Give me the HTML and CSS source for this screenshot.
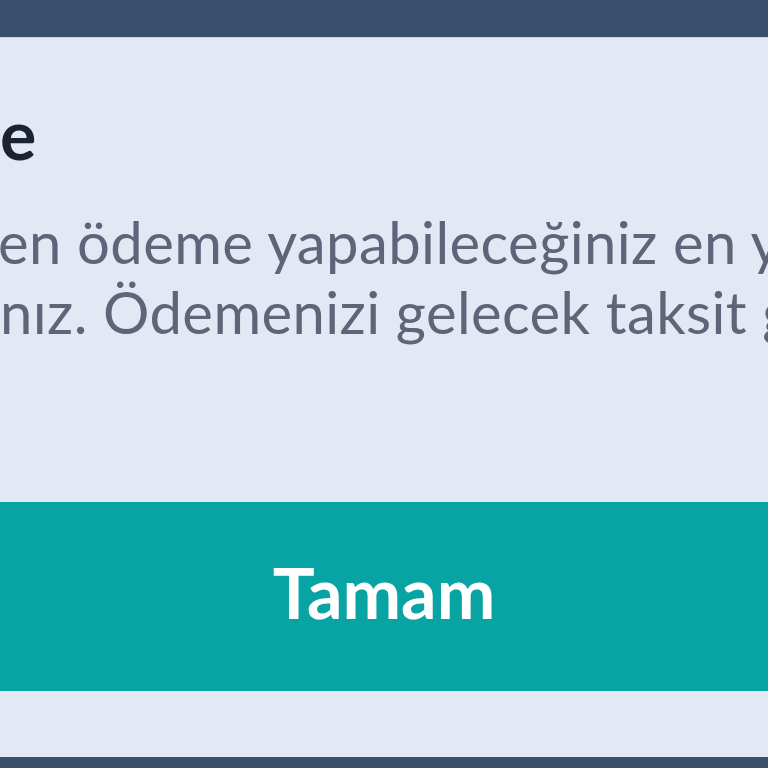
FILE: index.html
```html
<!DOCTYPE html>
<html lang="tr">
<head>
<meta charset="utf-8">
<link rel="stylesheet" href="styles.css">
</head>
<body>
<div class="topbar"></div>
<div class="panel">
  <div class="title">me</div>
  <div class="body">
    <div class="line line1">en ödeme yapabileceğiniz en yüksek</div>
    <div class="line line2">nız. Ödemenizi gelecek taksit günü</div>
  </div>
  <div class="button">Tamam</div>
</div>
<div class="bottombar"></div>
</body>
</html>
```
FILE: styles.css
```css
html, body {
  margin: 0;
  padding: 0;
  width: 768px;
  height: 768px;
  overflow: hidden;
  background: #e2e9f5;
  font-family: Lato, "Open Sans", sans-serif;
}
.topbar {
  height: 37px;
  background: #3a4f6b;
  border-bottom: 1px solid #c9cfee;
}
.panel {
  height: 719px;
  background: #e2e9f5;
  display: flex;
  flex-direction: column;
  overflow: hidden;
}
.title {
  margin-top: 56px;
  margin-left: -57px;
  font-size: 68px;
  line-height: 80px;
  font-weight: 700;
  color: #1b2232;
  white-space: nowrap;
}
.body {
  margin-top: 33px;
  color: #5f6579;
  font-size: 58px;
  letter-spacing: 0.4px;
  line-height: 70px;
  white-space: nowrap;
}
.line1 { margin-left: -2px; }
.line2 { margin-left: 0; }
.button {
  margin-top: 155px;
  height: 189px;
  flex-shrink: 0;
  box-sizing: border-box;
  padding-bottom: 10px;
  background: #08a3a3;
  color: #ffffff;
  font-size: 70px;
  font-weight: 700;
  display: flex;
  align-items: center;
  justify-content: center;
}
.bottombar {
  height: 20px;
  background: #3a4f6b;
}
```
